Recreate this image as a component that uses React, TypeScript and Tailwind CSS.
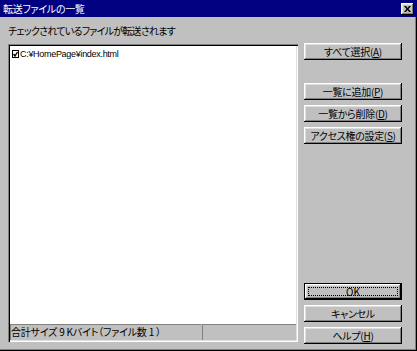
import React from "react";

const jp = "font-['Noto_Sans_CJK_JP',sans-serif] [font-feature-settings:'palt']";

const raised =
  "shadow-[inset_-1px_-1px_#000,inset_1px_1px_#fff,inset_-2px_-2px_#808080,inset_2px_2px_#dfdfdf]";

function Btn({
  label,
  keyChar,
  isDefault = false,
}: {
  label: string;
  keyChar?: string;
  isDefault?: boolean;
}) {
  const text = (
    <>
      {label}
      {keyChar && (
        <>
          (<span className="underline underline-offset-1">{keyChar}</span>)
        </>
      )}
    </>
  );
  if (isDefault) {
    return (
      <div className="h-[17px] w-[98px] border border-black">
        <div className={`h-full w-full bg-[#c0c0c0] p-[3px] ${raised}`}>
          <div className="flex h-full w-full items-center justify-center border border-dotted border-black text-[10px] leading-none text-black">
            {text}
          </div>
        </div>
      </div>
    );
  }
  return (
    <div
      className={`flex h-[17px] w-[98px] items-center justify-center bg-[#c0c0c0] text-[10px] leading-none tracking-[-0.3px] text-black ${raised}`}
    >
      {text}
    </div>
  );
}

export default function App() {
  return (
    <div
      className={`flex h-[351px] w-[417px] flex-col bg-[#c0c0c0] shadow-[inset_-1px_-1px_#000,inset_-2px_-2px_#808080] ${jp}`}
    >
      {/* title bar */}
      <div className="flex h-[17px] items-center justify-between bg-[#000080] pl-[3px] pr-[3px]">
        <span className="text-[10px] leading-none tracking-[-0.3px] text-white">転送ファイルの一覧</span>
        <div className={`flex h-[12px] w-[13px] items-center justify-center bg-[#c0c0c0] ${raised}`}>
          <svg width="7" height="6" viewBox="0 0 7 6">
            <path d="M0 0h2l1.5 2L5 0h2L4.5 3L7 6H5L3.5 4L2 6H0l2.5-3z" fill="#000" />
          </svg>
        </div>
      </div>

      <div className="flex flex-1 pl-[8px]">
        {/* left column */}
        <div className="flex w-[290px] flex-col pt-[7px]">
          <div className="h-[14px] text-[10px] leading-[14px] tracking-[-0.75px] text-black">
            チェックされているファイルが転送されます
          </div>
          <div className="mt-[6px] flex h-[298px] flex-col p-[2px] shadow-[inset_1px_1px_#808080,inset_2px_2px_#000,inset_-1px_-1px_#fff,inset_-2px_-2px_#dfdfdf]">
            <div className="flex-1 bg-white pl-[2px] pt-[3px]">
              <div className="flex items-center gap-[1px]">
                <svg width="7" height="8" viewBox="0 0 7 8">
                  <rect x="0.5" y="0.5" width="6" height="7" fill="#fff" stroke="#000" />
                  <path d="M1.5 4l1.5 2 2.5-4" fill="none" stroke="#000" strokeWidth="1.4" />
                </svg>
                <span className="font-['Liberation_Sans',sans-serif] text-[9px] leading-[10px] tracking-[-0.3px] text-black">
                  C:¥HomePage¥index.html
                </span>
              </div>
            </div>
            <div className="flex h-[16px]">
              <div className="flex w-[191px] items-center pl-[1px] text-[10px] leading-none tracking-[-0.2px] text-black shadow-[inset_1px_1px_#808080]">
                合計サイズ 9 Kバイト（ファイル数 1 ）
              </div>
              <div className="ml-[1px] flex-1 shadow-[inset_1px_1px_#808080]" />
            </div>
          </div>
        </div>

        {/* right column */}
        <div className="ml-[6px] flex flex-col pb-[7px] pt-[26px]">
          <Btn label="すべて選択" keyChar="A" />
          <div className="mt-[23px] flex flex-col gap-[5px]">
            <Btn label="一覧に追加" keyChar="P" />
            <Btn label="一覧から削除" keyChar="D" />
            <Btn label="アクセス権の設定" keyChar="S" />
          </div>
          <div className="mt-auto flex flex-col gap-[5px]">
            <Btn label="OK" isDefault />
            <Btn label="キャンセル" />
            <Btn label="ヘルプ" keyChar="H" />
          </div>
        </div>
      </div>
    </div>
  );
}
